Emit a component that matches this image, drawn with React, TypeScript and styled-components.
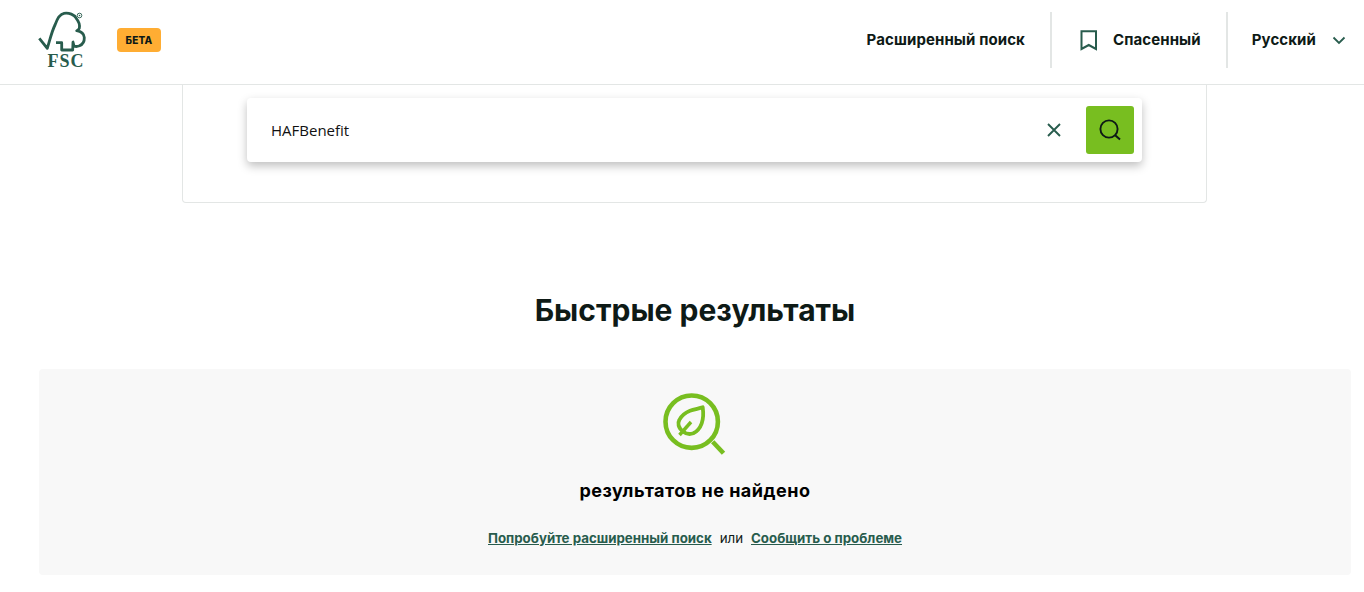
import React from 'react'
import styled, {createGlobalStyle} from 'styled-components'

const GREEN = '#285c4d'
const LIME = '#78be20'
const INK = '#0e1a16'

const GlobalStyle = createGlobalStyle`
  html, body {
    margin: 0;
    background: #fff;
    overflow: hidden;
  }
  body {
    font-family: 'Inter', 'Noto Sans', sans-serif;
    color: ${INK};
  }
`

const FscLogo = () => (
  <LogoWrap>
    <svg width="50" height="44" viewBox="0 0 50 44" fill="none">
      <path
        d="M1.3 28.3 L9.3 38.3 C12 30 13.5 22 17 15 C19 9 21.5 4 26 3.3 C31 2.6 36.5 4.5 38.2 8.3 C40.5 11 42 15 41.3 18.3 C40.8 19.6 39.8 20.3 38.7 20.7 C43 21.5 46 24 46.3 27.5 C46.5 31.5 44.5 34.5 41.5 35.8 C39.5 36.6 37.5 36.7 36 36 L35 32 L34.7 40 L23.7 40 L23.7 32.7 L18 32.7"
        stroke={GREEN}
        strokeWidth="2.8"
        strokeLinejoin="round"
        strokeLinecap="butt"
      />
      <circle cx="41.5" cy="5.5" r="2.3" stroke={GREEN} strokeWidth="0.9" />
      <circle cx="41.5" cy="5.5" r="0.8" fill={GREEN} />
    </svg>
    <LogoText>FSC</LogoText>
  </LogoWrap>
)

const BookmarkIcon = () => (
  <svg width="18" height="21" viewBox="0 0 18 21" fill="none">
    <path d="M1.5 1.2 H16 V19 L8.75 15 L1.5 19 Z" stroke={GREEN} strokeWidth="2" />
  </svg>
)

const ChevronIcon = () => (
  <svg width="14" height="9" viewBox="0 0 14 9" fill="none">
    <path d="M1.5 1.5 L7 7 L12.5 1.5" stroke={GREEN} strokeWidth="1.8" />
  </svg>
)

const CloseIcon = () => (
  <svg width="14" height="14" viewBox="0 0 14 14" fill="none">
    <path d="M1 1 L13 13 M13 1 L1 13" stroke={GREEN} strokeWidth="1.9" />
  </svg>
)

const SearchIcon = () => (
  <svg width="22" height="22" viewBox="0 0 22 22" fill="none">
    <circle cx="10" cy="10" r="8.6" stroke={INK} strokeWidth="1.9" />
    <path d="M16.2 16.2 L21 20.6" stroke={INK} strokeWidth="2" />
  </svg>
)

const LeafSearchIcon = () => (
  <svg width="64" height="64" viewBox="0 0 64 64" fill="none">
    <circle cx="28.7" cy="29.7" r="26.2" stroke={LIME} strokeWidth="4.6" />
    <path d="M49.7 49.7 L60.5 61.3" stroke={LIME} strokeWidth="4.6" />
    <path
      d="M20.3 39.7 C15 36 14.5 31 16.3 28 C18.5 23.5 22.5 20.5 27 18.7 C31 17.3 36 16.5 39.7 15.3 C40.5 21 40.5 26.5 38.7 31.3 C37 36 34 39.5 30.3 41.3 C27 42.5 23 41.8 20.3 39.7 Z"
      stroke={LIME}
      strokeWidth="3.8"
      strokeLinejoin="round"
    />
    <path d="M16.5 43 L28 30" stroke={LIME} strokeWidth="3.4" />
  </svg>
)

export default function App() {
  return (
    <>
      <GlobalStyle />
      <Header>
        <Brand>
          <FscLogo />
          <BetaBadge>БЕТА</BetaBadge>
        </Brand>
        <Nav>
          <NavItem $pad="0 25px 0 0" $gap={16}>
            <NavLabel>Расширенный поиск</NavLabel>
          </NavItem>
          <NavItem $pad="0 25px 0 28px" $gap={15} $divider>
            <BookmarkIcon />
            <NavLabel>Спасенный</NavLabel>
          </NavItem>
          <NavItem $pad="0 0 0 24px" $gap={16} $divider>
            <NavLabel>Русский</NavLabel>
            <ChevronIcon />
          </NavItem>
        </Nav>
      </Header>
      <Main>
        <SearchCard>
          <SearchBox>
            <SearchText>HAFBenefit</SearchText>
            <ClearButton>
              <CloseIcon />
            </ClearButton>
            <SearchButton>
              <SearchIcon />
            </SearchButton>
          </SearchBox>
        </SearchCard>
        <Title>Быстрые результаты</Title>
        <EmptyPanel>
          <LeafSearchIcon />
          <EmptyTitle>результатов не найдено</EmptyTitle>
          <EmptyLinks>
            <EmptyLink>Попробуйте расширенный поиск</EmptyLink>
            <span>или</span>
            <EmptyLink>Сообщить о проблеме</EmptyLink>
          </EmptyLinks>
        </EmptyPanel>
      </Main>
    </>
  )
}

const Header = styled.header`
  height: 84px;
  border-bottom: 1px solid #e3e6e5;
  display: flex;
  align-items: center;
  justify-content: space-between;
  padding: 0 18px 0 38px;
`

const Brand = styled.div`
  display: flex;
  align-items: center;
  gap: 30px;
`

const LogoWrap = styled.div`
  width: 49px;
  display: flex;
  flex-direction: column;
  align-items: center;
  margin-bottom: 6px;
`

const LogoText = styled.div`
  font-family: 'Liberation Serif', serif;
  font-weight: 700;
  font-size: 18px;
  line-height: 15px;
  letter-spacing: 1px;
  color: ${GREEN};
  padding-left: 7px;
`

const BetaBadge = styled.div`
  width: 44px;
  height: 24px;
  border-radius: 4px;
  background: #ffad33;
  margin-bottom: 5px;
  display: flex;
  align-items: center;
  justify-content: center;
  font-size: 10px;
  font-weight: 800;
  letter-spacing: 0.2px;
`

const Nav = styled.nav`
  display: flex;
  align-items: center;
  margin-bottom: 4px;
`

const NavItem = styled.div<{$pad: string; $gap: number; $divider?: boolean}>`
  height: 56px;
  display: flex;
  align-items: center;
  gap: ${props => props.$gap}px;
  padding: ${props => props.$pad};
  border-left: ${props => (props.$divider ? '2px solid #e3e6e5' : 'none')};
  box-sizing: border-box;
`

const NavLabel = styled.span`
  font-size: 15px;
  font-weight: 700;
  line-height: 20px;
  letter-spacing: 0.1px;
  white-space: nowrap;
`

const Main = styled.main`
  padding: 0 13px 0 39px;
`

const SearchCard = styled.section`
  width: 1025px;
  height: 118px;
  margin-left: 143px;
  box-sizing: border-box;
  border: 1px solid #e3e6e5;
  border-top: none;
  border-radius: 0 0 4px 4px;
  padding-top: 13px;
  display: flex;
  justify-content: center;
`

const SearchBox = styled.div`
  width: 895px;
  height: 64px;
  box-sizing: border-box;
  border-radius: 4px;
  background: #fff;
  box-shadow: 0 4px 10px rgba(0, 0, 0, 0.25);
  display: flex;
  align-items: center;
  padding: 0 8px 0 24px;
`

const SearchText = styled.div`
  flex: 1;
  font-family: 'Open Sans', 'Noto Sans', sans-serif;
  font-size: 15px;
  color: #111;
`

const ClearButton = styled.div`
  width: 14px;
  height: 14px;
  display: flex;
  margin-right: 25px;
`

const SearchButton = styled.div`
  width: 48px;
  height: 48px;
  border-radius: 3px;
  background: ${LIME};
  display: flex;
  align-items: center;
  justify-content: center;
`

const Title = styled.h2`
  margin: 87px 0 0;
  height: 79px;
  text-align: center;
  font-size: 30px;
  line-height: 40px;
  font-weight: 700;
`

const EmptyPanel = styled.section`
  height: 206px;
  box-sizing: border-box;
  border-radius: 4px;
  background: #f8f8f8;
  padding-top: 23px;
  display: flex;
  flex-direction: column;
  align-items: center;
`

const EmptyTitle = styled.div`
  margin-top: 23px;
  font-size: 18px;
  line-height: 24px;
  font-weight: 700;
  letter-spacing: 0.5px;
  color: #000;
`

const EmptyLinks = styled.div`
  margin-top: 25px;
  display: flex;
  gap: 8px;
  font-size: 13.3px;
  line-height: 20px;
`

const EmptyLink = styled.span`
  color: ${GREEN};
  font-weight: 700;
  text-decoration: underline;
`
